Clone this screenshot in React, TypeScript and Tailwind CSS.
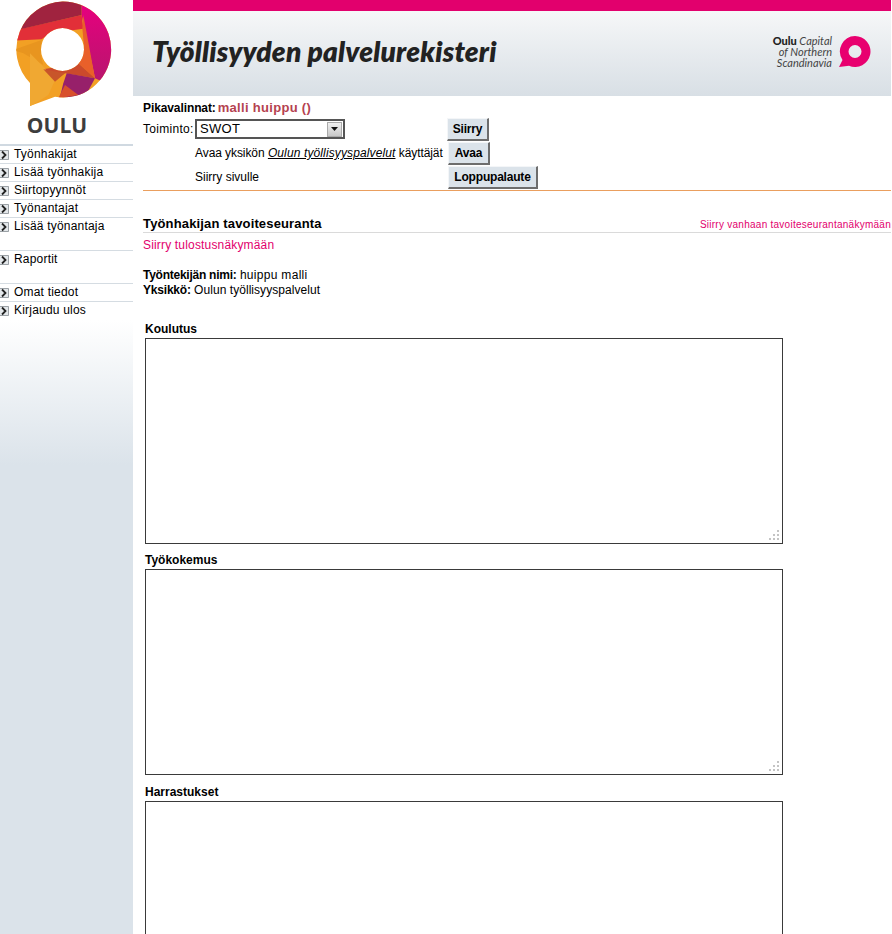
import React from "react";

function Arrow() {
  return (
    <svg width="9" height="10" viewBox="0 0 9 10" className="shrink-0 mr-[5px]">
      <rect x="0" y="0" width="9" height="10" fill="#e3e7ea" />
      <path d="M0 0.500H8.500V9.500H0" fill="none" stroke="#9aa0a5" />
      <path d="M2 1.500L5.500 5L2 8.500" fill="none" stroke="#222" strokeWidth="1.800" />
    </svg>
  );
}

function NavItem({ label, line = true, first = false }: { label: string; line?: boolean; first?: boolean }) {
  return (
    <div className={`${first ? "h-[17px]" : "h-[18px]"} flex items-center ${line ? "border-t border-[#d5dce2]" : ""}`}>
      <Arrow />
      <span className="text-[12px] leading-[16px] tracking-[0.2px] text-black -mt-[2px]">{label}</span>
    </div>
  );
}

function Logo() {
  return (
    <svg width="133" height="144" viewBox="0 0 133 144" className="block">
      <defs>
        <clipPath id="ring">
          <path clipRule="evenodd" d="M62.500 1.500A48 48 0 1 1 55 96.800L30 106L30 83A48 48 0 0 1 62.500 1.500ZM62.500 28A21.500 21.500 0 1 0 62.510 71A21.500 21.500 0 1 0 62.500 28Z" />
        </clipPath>
        <linearGradient id="pink" x1="0" y1="0" x2="0" y2="1">
          <stop offset="0" stopColor="#e6007e" />
          <stop offset="1" stopColor="#b4186c" />
        </linearGradient>
      </defs>
      <g clipPath="url(#ring)">
        <g transform="scale(0.33333)">
          <rect x="30" y="0" width="320" height="340" fill="#f2a024" />
          <path d="M40 122L125 118L150 100L250 86L245 45L48 90Z" fill="#e22f38" />
          <path d="M30 95L245 45L245 0H30Z" fill="#a0233f" />
          <path d="M245 45L245 15L340 60L340 260L285 235Z" fill="url(#pink)" />
          <path d="M247 85L250 45L285 235L235 190L252 140Z" fill="#e9602a" />
          <path d="M130 208L235 190L285 235L195 220L165 240Z" fill="#cb4a2c" />
          <path d="M200 220L285 235L250 300L180 290L190 250Z" fill="#97206a" />
          <path d="M195 255L235 285L175 295Z" fill="#d8502c" />
          <path d="M40 150L125 120L122 165L130 195L70 160Z" fill="#e8951f" />
          <path d="M90 160L130 200L165 240L145 285L90 320Z" fill="#f0a832" />
          <path d="M130 208L195 220L165 245Z" fill="#c8552a" />
        </g>
      </g>
      <text x="57" y="133" textAnchor="middle" fontWeight="700" fontSize="21" fill="#3d3d3d" fontFamily="'Open Sans', sans-serif">OULU</text>
    </svg>
  );
}

function Btn({ children, className = "" }: { children: React.ReactNode; className?: string }) {
  return (
    <div className={`h-[23px] bg-[#dbe3ea] border-t border-l border-[#f4f6f8] border-r-2 border-b-2 border-r-[#6d6d6d] border-b-[#6d6d6d] flex items-center justify-center text-[12px] tracking-[-0.2px] font-bold text-black ${className}`}>
      {children}
    </div>
  );
}

function Dot() {
  return <b className="w-[2px] h-[2px] bg-[#c4c4c4]" />;
}

function Area({ label, height, className = "" }: { label: string; height: number; className?: string }) {
  return (
    <div className={`pl-[2px] shrink-0 ${className}`}>
      <div className="h-[16px] leading-[14px] text-[12px] font-bold text-black">{label}</div>
      <div className="relative w-[638px] border border-[#3a3a3a] bg-white" style={{ height }}>
        <div className="absolute right-[3px] bottom-[3px] grid grid-cols-3 gap-[2px]">
          <i /><i /><Dot />
          <i /><Dot /><Dot />
          <Dot /><Dot /><Dot />
        </div>
      </div>
    </div>
  );
}

export default function App() {
  return (
    <div className="flex w-[892px] h-[934px] overflow-hidden bg-white text-[12px] text-black font-['Liberation_Sans',Arial,sans-serif]">
      <aside className="w-[133px] shrink-0 bg-[linear-gradient(to_bottom,#ffffff_0px,#ffffff_320px,#dbe3ea_465px,#dbe3ea_100%)]">
        <Logo />
        <nav className="border-t-2 border-[#d0d9e1]">
          <NavItem label="Työnhakijat" line={false} first />
          <NavItem label="Lisää työnhakija" />
          <NavItem label="Siirtopyynnöt" />
          <NavItem label="Työnantajat" />
          <NavItem label="Lisää työnantaja" />
          <div className="h-[15px]" />
          <NavItem label="Raportit" />
          <div className="h-[15px]" />
          <NavItem label="Omat tiedot" />
          <NavItem label="Kirjaudu ulos" />
        </nav>
      </aside>
      <main className="flex-1 min-w-0 flex flex-col mr-px">
        <div className="h-[11px] shrink-0 bg-[#e2006d]" />
        <header className="h-[85px] shrink-0 flex items-center justify-between bg-[linear-gradient(to_bottom,#f6f7f8,#d8dfe5)] pl-[19px]">
          <h1 className="text-[28px] leading-[30px] font-extrabold italic text-[#222] font-['Lato',sans-serif] -mt-[5px] tracking-[0.2px]">Työllisyyden palvelurekisteri</h1>
          <div className="flex items-center mr-[20px] -mt-[5px] gap-[6px]">
            <div className="text-right text-[11px] leading-[11px] text-[#444] italic font-['Lato',sans-serif]">
              <div><b className="text-[#222] not-italic font-black">Oulu</b> Capital</div>
              <div>of Northern</div>
              <div>Scandinavia</div>
            </div>
            <svg width="33" height="33" viewBox="0 0 33 33">
              <path fillRule="evenodd" d="M17 1A15.500 15.500 0 1 1 11 30.800L1 32L4.500 25A15.500 15.500 0 0 1 17 1ZM17 10A6.500 6.500 0 1 0 17.010 23A6.500 6.500 0 1 0 17 10Z" fill="#e8006f" />
            </svg>
          </div>
        </header>
        <section className="shrink-0 pl-[10px] pt-[3px]">
          <div className="h-[18px] flex items-center">
            <b className="tracking-[-0.1px]">Pikavalinnat:</b>
            <b className="ml-[2px] text-[13px] text-[#b5424f] tracking-[0.3px]">malli huippu ()</b>
          </div>
          <div className="h-[24px] flex items-center">
            <span className="w-[52px] tracking-[0.3px]">Toiminto:</span>
            <div className="w-[150px] h-[20px] border-2 border-[#555] flex items-center justify-between pl-[3px] pr-[1px] text-[13px] tracking-[0.3px]">
              SWOT
              <span className="w-[15px] h-[15px] border border-[#aaa] bg-[linear-gradient(to_bottom,#f0f0f0,#c8c8c8)] flex items-center justify-center">
                <svg width="7" height="4" viewBox="0 0 7 4"><path d="M0 0H7L3.500 4Z" fill="#111" /></svg>
              </span>
            </div>
            <Btn className="ml-[102px] w-[42px]">Siirry</Btn>
          </div>
          <div className="h-[24px] flex items-center pl-[52px]">
            <span className="w-[253px] whitespace-nowrap">
              <span className="tracking-[-0.08px]">Avaa yksikön</span> <a className="italic underline tracking-[0.12px]">Oulun työllisyyspalvelut</a> <span className="tracking-[-0.1px]">käyttäjät</span>
            </span>
            <Btn className="w-[42px]">Avaa</Btn>
          </div>
          <div className="h-[24px] flex items-center pl-[52px]">
            <span className="w-[253px]">Siirry sivulle</span>
            <Btn className="w-[90px]">Loppupalaute</Btn>
          </div>
          <div className="h-px mt-[1px] bg-[#ea9f5e]" />
        </section>
        <section className="shrink-0 pl-[10px] pt-[25px]">
          <div className="flex items-end justify-between border-b border-[#dadada] h-[17px]">
            <b className="text-[13px] leading-[16px] tracking-[0.15px]">Työnhakijan tavoiteseuranta</b>
            <a className="text-[10px] leading-[14px] tracking-[0.26px] text-[#e2006d] whitespace-nowrap">Siirry vanhaan tavoiteseurantanäkymään</a>
          </div>
          <a className="block mt-[4px] leading-[16px] tracking-[0.17px] text-[#e2006d]">Siirry tulostusnäkymään</a>
          <div className="mt-[15px] leading-[15px]"><b className="tracking-[-0.25px]">Työntekijän nimi:</b> <span className="tracking-[0.3px]">huippu malli</span></div>
          <div className="leading-[15px]"><b className="tracking-[-0.2px]">Yksikkö:</b> <span className="tracking-[0.05px]">Oulun työllisyyspalvelut</span></div>
        </section>
        <section className="pl-[10px] pt-[24px] flex flex-col gap-[9px]">
          <Area label="Koulutus" height={206} />
          <Area label="Työkokemus" height={206} />
          <Area label="Harrastukset" height={206} className="mt-px" />
        </section>
      </main>
    </div>
  );
}
